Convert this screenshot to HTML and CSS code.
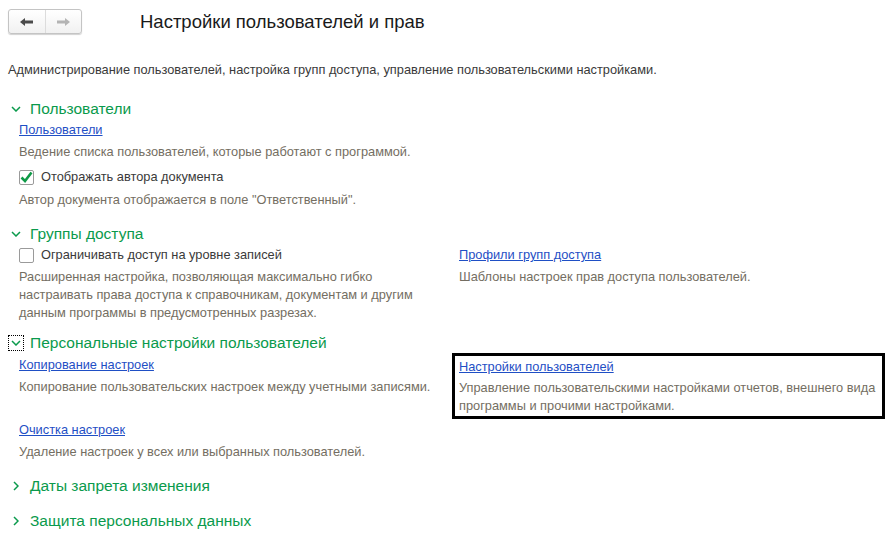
FILE: index.html
```html
<!DOCTYPE html>
<html lang="ru">
<head>
<meta charset="utf-8">
<title>Настройки пользователей и прав</title>
<link rel="stylesheet" href="styles.css">
</head>
<body>
<div class="page">
  <div class="header">
    <div class="nav">
      <span class="nav-btn">
        <svg width="14" height="8" viewBox="0 0 14 8"><path d="M0 4 L5 0 L5 2.5 L13 2.5 L13 5.5 L5 5.5 L5 8 Z" fill="#4a4a4a"/></svg>
      </span>
      <span class="nav-btn nav-btn-right">
        <svg width="14" height="8" viewBox="0 0 14 8"><path d="M14 4 L9 0 L9 2.5 L1 2.5 L1 5.5 L9 5.5 L9 8 Z" fill="#b4b4b4"/></svg>
      </span>
    </div>
    <h1 class="title">Настройки пользователей и прав</h1>
  </div>

  <p class="intro">Администрирование пользователей, настройка групп доступа, управление пользовательскими настройками.</p>

  <section class="group g1">
    <div class="group-head">
      <span class="chev"><svg width="10" height="6" viewBox="0 0 10 6"><path d="M1 1 L5 5 L9 1" fill="none" stroke="#0a9a4c" stroke-width="1.5"/></svg></span>
      <span class="group-title">Пользователи</span>
    </div>
    <div class="col">
      <div class="row"><a class="link" href="#">Пользователи</a></div>
      <div class="row desc">Ведение списка пользователей, которые работают с программой.</div>
      <div class="row check-row">
        <span class="cb checked"><svg width="13" height="12" viewBox="0 0 13 12"><path d="M1.5 6.5 L5 10 L11.5 1.5" fill="none" stroke="#0f9a47" stroke-width="2.6"/></svg></span>
        <span class="label">Отображать автора документа</span>
      </div>
      <div class="row desc">Автор документа отображается в поле "Ответственный".</div>
    </div>
  </section>

  <section class="group g2">
    <div class="group-head">
      <span class="chev"><svg width="10" height="6" viewBox="0 0 10 6"><path d="M1 1 L5 5 L9 1" fill="none" stroke="#0a9a4c" stroke-width="1.5"/></svg></span>
      <span class="group-title">Группы доступа</span>
    </div>
    <div class="cols">
      <div class="col">
        <div class="row check-row">
          <span class="cb"></span>
          <span class="label">Ограничивать доступ на уровне записей</span>
        </div>
        <div class="desc multi">Расширенная настройка, позволяющая максимально гибко<br>настраивать права доступа к справочникам, документам и другим<br>данным программы в предусмотренных разрезах.</div>
      </div>
      <div class="col col-right">
        <div class="row"><a class="link" href="#">Профили групп доступа</a></div>
        <div class="desc multi">Шаблоны настроек прав доступа пользователей.</div>
      </div>
    </div>
  </section>

  <section class="group g3">
    <div class="group-head">
      <span class="chev focused"><svg width="10" height="6" viewBox="0 0 10 6"><path d="M1 1 L5 5 L9 1" fill="none" stroke="#0a9a4c" stroke-width="1.5"/></svg></span>
      <span class="group-title">Персональные настройки пользователей</span>
    </div>
    <div class="cols">
      <div class="col">
        <div class="row"><a class="link" href="#">Копирование настроек</a></div>
        <div class="row desc">Копирование пользовательских настроек между учетными записями.</div>
        <div class="row gap-row"><a class="link" href="#">Очистка настроек</a></div>
        <div class="row desc">Удаление настроек у всех или выбранных пользователей.</div>
      </div>
      <div class="col col-right">
        <div class="box">
          <div class="box-link"><a class="link" href="#">Настройки пользователей</a></div>
          <div class="desc multi">Управление пользовательскими настройками отчетов, внешнего вида<br>программы и прочими настройками.</div>
        </div>
      </div>
    </div>
  </section>

  <section class="group g4">
    <div class="group-head">
      <span class="chev"><svg width="6" height="10" viewBox="0 0 6 10"><path d="M1 1 L5 5 L1 9" fill="none" stroke="#0a9a4c" stroke-width="1.5"/></svg></span>
      <span class="group-title">Даты запрета изменения</span>
    </div>
  </section>

  <section class="group g5">
    <div class="group-head">
      <span class="chev"><svg width="6" height="10" viewBox="0 0 6 10"><path d="M1 1 L5 5 L1 9" fill="none" stroke="#0a9a4c" stroke-width="1.5"/></svg></span>
      <span class="group-title">Защита персональных данных</span>
    </div>
  </section>
</div>
</body>
</html>
```

FILE: styles.css
```css
* { box-sizing: border-box; }
html, body { margin: 0; padding: 0; background: #fff; }
body {
  font-family: "Liberation Sans", Arial, sans-serif;
  font-size: 12.8px;
  color: #333;
}
.page { padding: 0 0 0 8px; }

.header {
  display: flex;
  align-items: center;
  padding-top: 9px;
  height: 34px;
}
.nav {
  display: flex;
  width: 74px;
  height: 25px;
  border: 1px solid #c4c4c4;
  border-radius: 3px;
  background: linear-gradient(#ffffff, #f1f1f1);
  box-shadow: 0 1px 1px rgba(0,0,0,0.18);
}
.nav-btn {
  flex: 1;
  display: flex;
  align-items: center;
  justify-content: center;
}
.nav-btn-right { border-left: 1px solid #dcdcdc; }
.title {
  margin: 0 0 0 58px;
  font-size: 18.5px;
  font-weight: normal;
  line-height: 26px;
  color: #1a1a1a;
}

.intro {
  margin: 28px 0 0;
  line-height: 16px;
  color: #3a3a3a;
}

.group-head {
  display: flex;
  align-items: center;
  height: 20px;
}
.chev {
  width: 16px;
  height: 16px;
  display: flex;
  align-items: center;
  justify-content: center;
  margin-right: 6px;
}
.chev.focused { border: 1px dotted #000; }
.group-title {
  font-size: 15.5px;
  line-height: 20px;
  color: #0a9a4c;
}

.g1 { margin-top: 21px; }
.g2 { margin-top: 13px; }
.g3 { margin-top: 11px; }
.g4 { margin-top: 13px; }
.g5 { margin-top: 15px; }

.cols { display: flex; }
.cols > .col:first-child { width: 444px; }
.col { padding-left: 11px; }
.col-right { padding-left: 0; width: 433px; }
.g2 .col-right { padding-left: 7px; }

.row { line-height: 22px; }
.check-row {
  display: flex;
  align-items: center;
  height: 22px;
}
.g1 .check-row { margin-top: 3px; }
.g1 .check-row + .desc { margin-top: 1px; }
.cb {
  width: 15px;
  height: 15px;
  border: 1px solid #9a9a9a;
  border-radius: 2px;
  background: #fff;
  margin-right: 7px;
  display: flex;
  align-items: center;
  justify-content: center;
}
.label { color: #3a3a3a; }

.link {
  color: #1f4fc5;
  text-decoration: underline;
}
.desc { color: #746e62; }
.multi { line-height: 18px; }
.g2 .multi { margin-top: 2px; }
.g3 .col:first-child { padding-top: 1px; }
.gap-row { margin-top: 21px; }

.box {
  border: 3px solid #000;
  padding: 0 4px 2px 4px;
  height: 66px;
}
.box-link { line-height: 21px; }
.box .multi { margin-top: 2px; }
```
